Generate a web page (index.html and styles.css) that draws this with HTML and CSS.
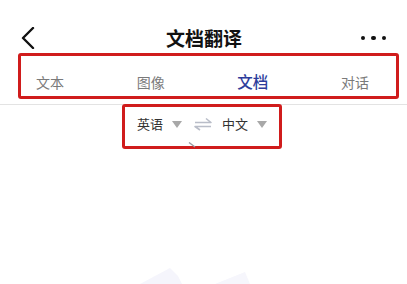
FILE: index.html
```html
<!DOCTYPE html>
<html lang="zh">
<head>
<meta charset="utf-8">
<link rel="stylesheet" href="styles.css">
</head>
<body>
<div class="page">
  <header class="nav">
    <div class="nav-left">
      <svg class="back" width="14" height="22" viewBox="0 0 14 22"><path d="M12 1 L2 11 L12 21" fill="none" stroke="#111" stroke-width="2.4" stroke-linecap="round" stroke-linejoin="round"/></svg>
    </div>
    <h1 class="title">文档翻译</h1>
    <div class="nav-right">
      <span class="dot"></span><span class="dot"></span><span class="dot"></span>
    </div>
  </header>
  <section class="tabs-wrap">
    <nav class="tabs">
      <span class="tab">文本</span>
      <span class="tab">图像</span>
      <span class="tab active">文档</span>
      <span class="tab">对话</span>
    </nav>
  </section>
  <div class="lang-row">
    <div class="lang-box">
      <span class="lang">英语</span>
      <span class="tri"></span>
      <svg class="swap" width="18" height="14" viewBox="0 0 18 14"><path d="M1 5.5 H17 L12 1.5" fill="none" stroke="#b9bdc8" stroke-width="1.6" stroke-linejoin="round"/><path d="M17 9.5 H1 L6 13" fill="none" stroke="#b9bdc8" stroke-width="1.6" stroke-linejoin="round"/></svg>
      <span class="lang">中文</span>
      <span class="tri"></span>
      <svg class="mark" width="8" height="6" viewBox="0 0 8 6"><path d="M1 0.5 L7 5" stroke="#9a9aa2" stroke-width="1.4"/></svg>
    </div>
  </div>
  <div class="canvas">
    <svg class="ghost" width="407" height="40" viewBox="0 0 407 40"><path d="M140 40 L170 24 L178 32 L182 40 Z" fill="#f5f5fc"/><path d="M215 40 L245 28 L250 40 Z" fill="#f6f6fc"/></svg>
  </div>
</div>
</body>
</html>
```
FILE: styles.css
```css
html, body {
  margin: 0;
  padding: 0;
  background: #fff;
}
.page {
  width: 407px;
  height: 284px;
  overflow: hidden;
  font-family: "Noto Sans CJK SC", "Noto Sans", sans-serif;
  display: flex;
  flex-direction: column;
}
.nav {
  display: grid;
  grid-template-columns: 1fr auto 1fr;
  align-items: center;
  height: 24px;
  padding: 26px 20px 0 21px;
}
.back {
  display: block;
}
.title {
  margin: 0;
  font-size: 19px;
  font-weight: 700;
  line-height: 24px;
  color: #111;
}
.nav-right {
  display: flex;
  justify-content: flex-end;
  gap: 6px;
  padding-right: 1px;
}
.dot {
  width: 4.5px;
  height: 4.5px;
  border-radius: 50%;
  background: #111;
}
.tabs-wrap {
  padding: 3px 8px 5px 18px;
  border-bottom: 1px solid #e3e3e3;
}
.tabs {
  height: 34px;
  border: 3px solid #d01c1c;
  border-radius: 3px;
  display: flex;
  justify-content: space-between;
  align-items: flex-end;
  padding: 0 27px 6px 15px;
}
.tab {
  font-size: 14px;
  line-height: 16px;
  color: #7a7a7a;
}
.tab.active {
  font-size: 15.5px;
  line-height: 17px;
  color: #2d3d9c;
  font-weight: 500;
}
.lang-row {
  display: flex;
  padding-left: 122px;
  margin-top: -1px;
}
.lang-box {
  position: relative;
  width: 142px;
  height: 34px;
  border: 3px solid #d01c1c;
  border-radius: 3px;
  display: flex;
  align-items: center;
  padding: 0 0 5px 12px;
  box-sizing: content-box;
}
.lang {
  font-size: 13px;
  line-height: 16px;
  color: #333;
}
.tri {
  width: 0;
  height: 0;
  border-left: 5.5px solid transparent;
  border-right: 5.5px solid transparent;
  border-top: 7px solid #a8a8a8;
  margin-left: 9px;
}
.swap {
  margin: 0 10px 0 12px;
}
.mark {
  position: absolute;
  left: 63px;
  top: 35px;
}
.canvas {
  flex: 1;
  display: flex;
  align-items: flex-end;
}
.ghost {
  display: block;
}
```
